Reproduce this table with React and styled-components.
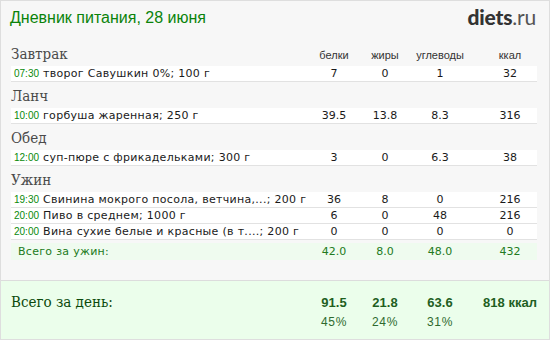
import React from 'react';
import styled, { createGlobalStyle } from 'styled-components';

const GlobalStyle = createGlobalStyle`
  body {
    margin: 0;
    background: #fff;
  }
`;

const Frame = styled.div`
  width: 548px;
  height: 338px;
  border: 1px solid #dedede;
  background: #f7f7f7;
  display: flex;
  flex-direction: column;
  font-family: "DejaVu Sans", Verdana, sans-serif;
`;

const Header = styled.div`
  display: flex;
  justify-content: space-between;
  align-items: center;
  height: 31px;
  padding: 0 13px 0 9px;
`;

const Title = styled.h1`
  margin: 0;
  font-family: "Liberation Sans", Arial, sans-serif;
  font-weight: normal;
  font-size: 16px;
  color: #0a830a;
  padding-top: 2px;
`;

const Logo = styled.div`
  font-family: Lato, "Open Sans", sans-serif;
  font-size: 21px;
  font-weight: 900;
  color: #333;
  letter-spacing: -0.2px;

  span {
    font-weight: normal;
    color: #555;
  }
`;

const Body = styled.div`
  flex: 1;
  padding: 0 12px 0 10px;
`;

const Grid = styled.div`
  display: grid;
  grid-template-columns: 1fr 50px 52px 58px 68px;
`;

const MealHead = styled(Grid)`
  height: 26px;
  align-items: end;
  padding-bottom: 3px;
  box-sizing: border-box;
  margin-top: ${(p) => (p.first ? '8px' : '0')};
`;

const MealName = styled.div`
  font-family: "DejaVu Serif Condensed", "DejaVu Serif", serif;
  font-size: 15px;
  line-height: 18px;
  color: #4a4a4a;
`;

const ColLabel = styled.div`
  font-family: "Liberation Sans", Arial, sans-serif;
  font-size: 11px;
  line-height: 14px;
  color: #333;
  text-align: center;
  padding-left: ${(p) => (p.last ? '14px' : '0')};
  padding-bottom: 1px;
`;

const Row = styled(Grid)`
  height: ${(p) => (p.total ? '17px' : '16px')};
  margin-top: ${(p) => (p.total ? '3px' : '0')};
  box-sizing: border-box;
  background: ${(p) => (p.total ? '#effbef' : '#fff')};
  border-bottom: 1px solid ${(p) => (p.total ? '#effbef' : '#e2e2e2')};
  align-items: center;
  font-size: 11px;
  line-height: 15px;
  color: ${(p) => (p.total ? '#217a21' : '#1a1a1a')};
`;

const Name = styled.div`
  white-space: nowrap;
  overflow: hidden;
  letter-spacing: 0.3px;
  padding-left: ${(p) => (p.total ? '7px' : '3px')};
`;

const Time = styled.span`
  font-family: "Liberation Sans", Arial, sans-serif;
  font-size: 10px;
  letter-spacing: 0;
  color: #0a8a0a;
  margin-right: 4px;
`;

const Cell = styled.div`
  text-align: center;
  padding-left: ${(p) => (p.last ? '14px' : '0')};
`;

const DayTotal = styled.div`
  height: 59px;
  box-sizing: border-box;
  border-top: 1px solid #dcdcdc;
  background: #ebfeeb;
  padding: 12px 12px 0 10px;
`;

const DayLabel = styled.div`
  font-family: "DejaVu Serif Condensed", "DejaVu Serif", serif;
  font-size: 15px;
  line-height: 18px;
  color: #0c4a0c;
`;

const Big = styled.div`
  font-family: "Liberation Sans", Arial, sans-serif;
  font-weight: bold;
  font-size: 13px;
  line-height: 14px;
  color: #1f5f1f;
  text-align: center;
  padding-left: ${(p) => (p.last ? '14px' : '0')};
  padding-top: 3px;
`;

const Pct = styled.div`
  font-family: "Liberation Sans", Arial, sans-serif;
  font-size: 12px;
  line-height: 13px;
  letter-spacing: 0.6px;
  color: #2f6a2f;
  text-align: center;
  padding-top: 5px;
`;

const meals = [
  {
    name: 'Завтрак',
    items: [['07:30', 'творог Савушкин 0%; 100 г', '7', '0', '1', '32']],
  },
  {
    name: 'Ланч',
    items: [['10:00', 'горбуша жаренная; 250 г', '39.5', '13.8', '8.3', '316']],
  },
  {
    name: 'Обед',
    items: [['12:00', 'суп-пюре с фрикадельками; 300 г', '3', '0', '6.3', '38']],
  },
  {
    name: 'Ужин',
    items: [
      ['19:30', 'Свинина мокрого посола, ветчина,...; 200 г', '36', '8', '0', '216'],
      ['20:00', 'Пиво в среднем; 1000 г', '6', '0', '48', '216'],
      ['20:00', 'Вина сухие белые и красные (в т....; 200 г', '0', '0', '0', '0'],
    ],
    total: ['Всего за ужин:', '42.0', '8.0', '48.0', '432'],
  },
];

const App = () => (
  <>
    <GlobalStyle />
    <Frame>
      <Header>
        <Title>Дневник питания, 28 июня</Title>
        <Logo>
          diets<span>.ru</span>
        </Logo>
      </Header>
      <Body>
        {meals.map((meal, i) => (
          <div key={meal.name}>
            <MealHead first={i === 0}>
              <MealName>{meal.name}</MealName>
              {i === 0 && (
                <>
                  <ColLabel>белки</ColLabel>
                  <ColLabel>жиры</ColLabel>
                  <ColLabel>углеводы</ColLabel>
                  <ColLabel last>ккал</ColLabel>
                </>
              )}
            </MealHead>
            {meal.items.map((it, j) => (
              <Row key={j}>
                <Name>
                  <Time>{it[0]}</Time>
                  {it[1]}
                </Name>
                <Cell>{it[2]}</Cell>
                <Cell>{it[3]}</Cell>
                <Cell>{it[4]}</Cell>
                <Cell last>{it[5]}</Cell>
              </Row>
            ))}
            {meal.total && (
              <Row total>
                <Name total>{meal.total[0]}</Name>
                <Cell>{meal.total[1]}</Cell>
                <Cell>{meal.total[2]}</Cell>
                <Cell>{meal.total[3]}</Cell>
                <Cell last>{meal.total[4]}</Cell>
              </Row>
            )}
          </div>
        ))}
      </Body>
      <DayTotal>
        <Grid>
          <DayLabel>Всего за день:</DayLabel>
          <Big>91.5</Big>
          <Big>21.8</Big>
          <Big>63.6</Big>
          <Big last>818 ккал</Big>
          <div />
          <Pct>45%</Pct>
          <Pct>24%</Pct>
          <Pct>31%</Pct>
        </Grid>
      </DayTotal>
    </Frame>
  </>
);

export default App;
